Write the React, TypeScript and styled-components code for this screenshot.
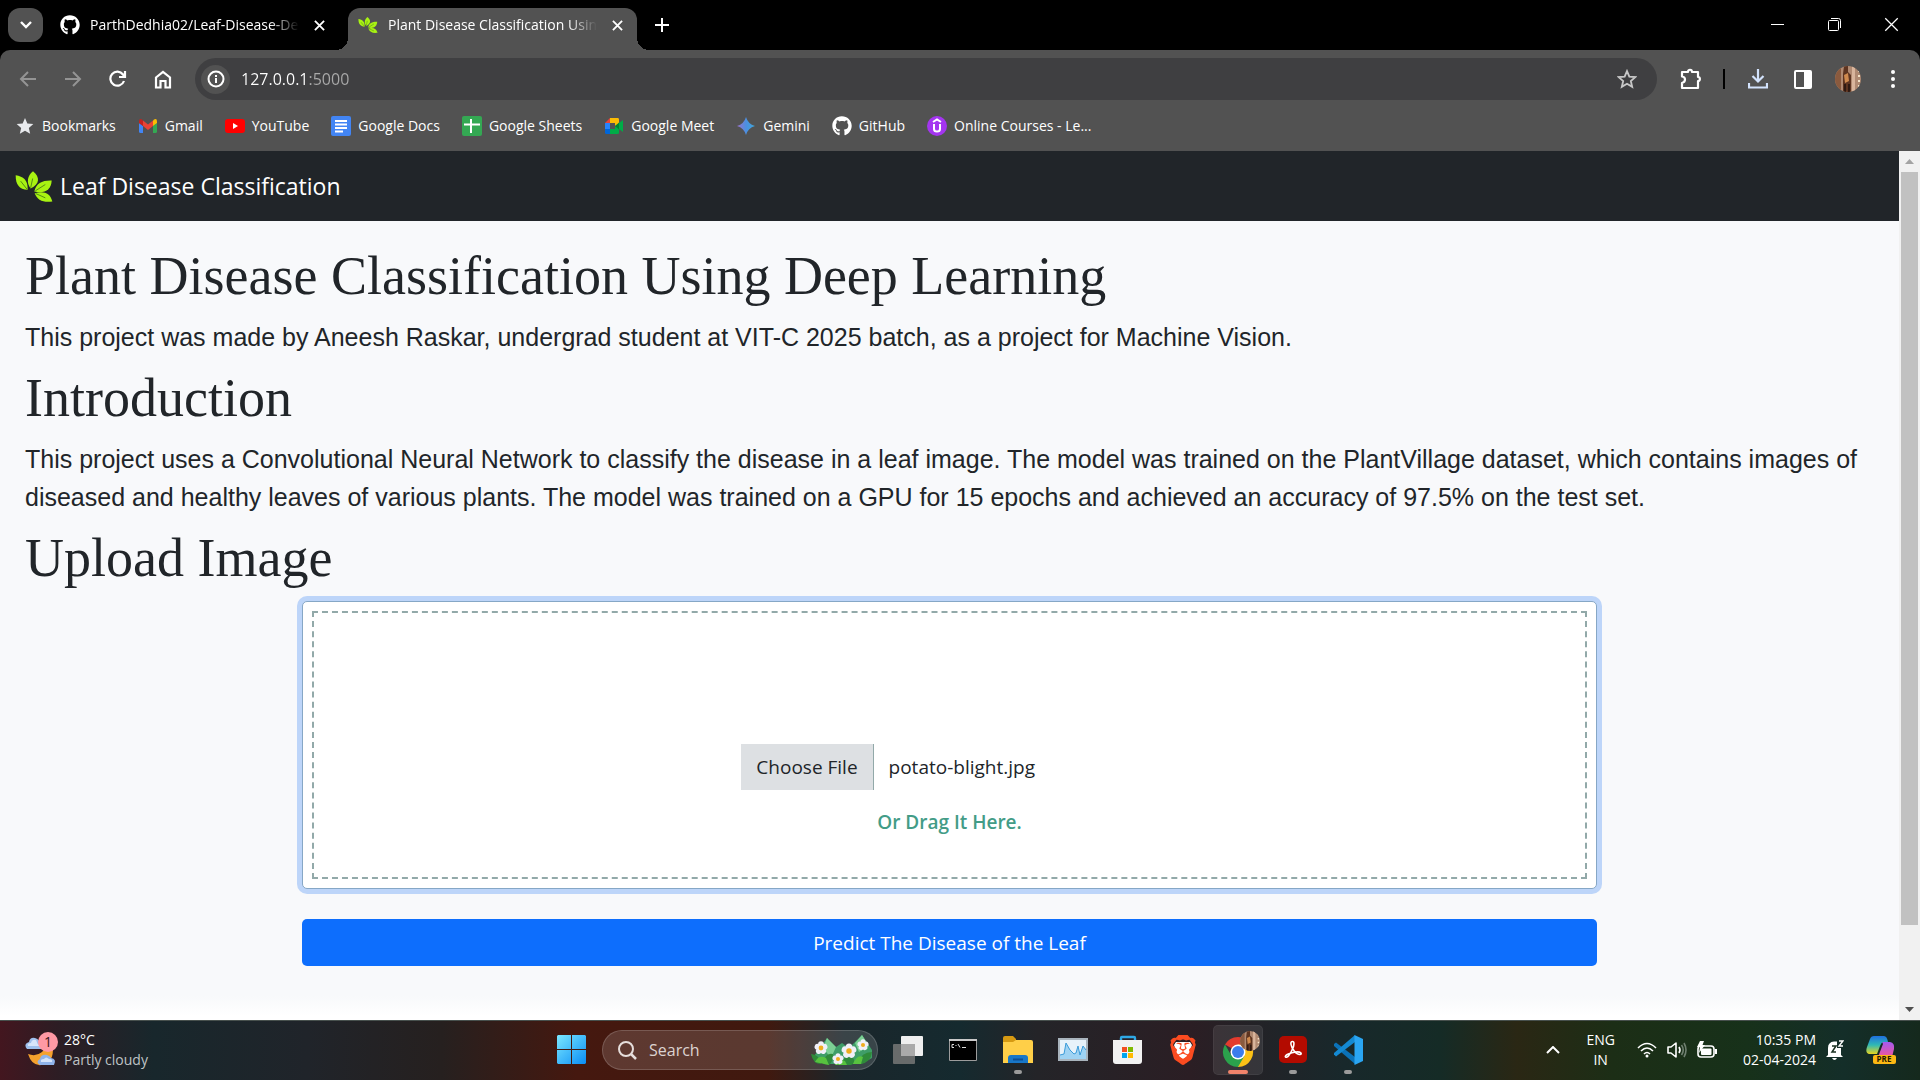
import React, { useEffect, useRef } from "react";
import styled, { createGlobalStyle, css } from "styled-components";
import { FaGithub } from "react-icons/fa";
import { SiBrave } from "react-icons/si";

const uiFont = `"Open Sans", "Noto Sans", sans-serif`;

const GlobalStyle = createGlobalStyle`
  *, *::before, *::after { box-sizing: border-box; }
  html, body { margin: 0; padding: 0; }
  body { font-family: ${uiFont}; background: #000; overflow: hidden; }
  button, input { font: inherit; margin: 0; }
  h1, p { margin: 0; }
`;

const Desktop = styled.div`
  display: flex;
  flex-direction: column;
  height: 100vh;
`;

const plainButton = css`
  display: inline-flex;
  align-items: center;
  justify-content: center;
  padding: 0;
  border: 0;
  background: none;
  color: #fff;
`;

/* ---------- Tab strip ---------- */

const TabStrip = styled.header`
  display: flex;
  align-items: flex-end;
  height: 50px;
  padding-left: 8px;
  background: #000;
`;

const TabSearch = styled.button`
  ${plainButton}
  width: 35px;
  height: 34px;
  margin-bottom: 8px;
  border-radius: 12px;
  background: #525252;
`;

const Tab = styled.div<{ $active?: boolean }>`
  position: relative;
  display: flex;
  align-items: center;
  gap: 10px;
  width: 289px;
  height: 42px;
  padding: 0 10px 8px;
  margin-left: ${(p) => (p.$active ? 9 : 7)}px;
  border-radius: 12px 12px 0 0;
  background: ${(p) => (p.$active ? "#525252" : "transparent")};
  color: #fff;

  ${(p) =>
    p.$active &&
    css`
      &::before,
      &::after {
        content: "";
        position: absolute;
        bottom: 0;
        width: 12px;
        height: 12px;
      }
      &::before {
        left: -12px;
        background: radial-gradient(circle at 0 0, transparent 12px, #525252 12px);
      }
      &::after {
        right: -12px;
        background: radial-gradient(circle at 100% 0, transparent 12px, #525252 12px);
      }
    `}
`;

const TabTitle = styled.span`
  flex: 1;
  white-space: nowrap;
  font-size: 14px;
  line-height: 20px;
  mask-image: linear-gradient(90deg, #000 86%, transparent 100%);
`;

const SmallButton = styled.button`
  ${plainButton}
  width: 20px;
  height: 20px;
`;

const NewTab = styled.button`
  ${plainButton}
  width: 34px;
  height: 34px;
  margin: 0 0 8px 8px;
`;

const WindowControls = styled.div`
  display: flex;
  align-self: flex-start;
  margin-left: auto;
`;

const WindowButton = styled.button`
  ${plainButton}
  width: 57px;
  height: 49px;
`;

/* ---------- Toolbar and bookmarks ---------- */

const ChromeFrame = styled.div`
  background: #525252;
  border-radius: 10px 10px 0 0;
`;

const Toolbar = styled.div`
  display: flex;
  align-items: center;
  height: 50px;
  padding: 8px 5px 0;
`;

const ToolButton = styled.button<{ $dim?: boolean }>`
  ${plainButton}
  width: 45px;
  height: 42px;
  color: ${(p) => (p.$dim ? "#949494" : "#fff")};
`;

const Omnibox = styled.form`
  display: flex;
  flex: 1;
  align-items: center;
  height: 42px;
  margin: 0 11px 0 10px;
  padding: 0 20px 0 6px;
  border-radius: 21px;
  background: #3f3f41;
`;

const SiteInfo = styled.button`
  ${plainButton}
  width: 29px;
  height: 29px;
  border-radius: 50%;
  background: #525252;
`;

const UrlInput = styled.input`
  flex: 1;
  min-width: 0;
  height: 28px;
  margin: 0 11px;
  padding: 0;
  border: 0;
  outline: 0;
  font-size: 16px;
  color: #fff;
  background: linear-gradient(90deg, #fff 68px, #aaa 68px);
  background-clip: text;
  -webkit-background-clip: text;
  -webkit-text-fill-color: transparent;
`;

const Divider = styled.span`
  width: 2px;
  height: 20px;
  margin: 0 10px;
  background: #000;
`;

const Bookmarks = styled.nav`
  display: flex;
  align-items: center;
  gap: 22px;
  height: 51px;
  padding-left: 15px;
`;

const Bookmark = styled.a`
  display: flex;
  align-items: center;
  gap: 7px;
  color: #fff;
  font-size: 14px;
  line-height: 20px;
  text-decoration: none;
  white-space: nowrap;
`;

/* ---------- Page ---------- */

const Viewport = styled.div`
  display: flex;
  flex: 1;
  min-height: 0;
`;

const Page = styled.div`
  flex: 1;
  min-width: 0;
  overflow: hidden;
  background: linear-gradient(0deg, #fff 4px, #f8f9fb 24px);
  color: #212529;
`;

const Navbar = styled.nav`
  display: flex;
  align-items: center;
  height: 70px;
  padding: 0 15px;
  background: #212529;
`;

const Brand = styled.a`
  display: flex;
  align-items: center;
  gap: 7px;
  color: #fff;
  font-size: 23px;
  line-height: 38px;
  text-decoration: none;
`;

const Main = styled.main`
  padding: 25px;
`;

const Heading = styled.h1`
  margin-bottom: 12px;
  font-family: "Liberation Serif", Georgia, serif;
  font-size: 54px;
  font-weight: 400;
  line-height: 60px;
`;

const Text = styled.p`
  margin-bottom: 12px;
  font-family: "Liberation Sans", Arial, sans-serif;
  font-size: 25px;
  line-height: 38px;
`;

const UploadForm = styled.form`
  display: flex;
  flex-direction: column;
  gap: 30px;
  width: 70%;
  margin: 13px auto 0;
`;

const DropZone = styled.div`
  position: relative;
`;

const FileInput = styled.input`
  display: block;
  width: 100%;
  padding: 150px 0 106px 35%;
  border: 1px solid #86a7c6;
  border-radius: 5px;
  outline: 2px dashed #92a9a9;
  outline-offset: -12px;
  background: #fff;
  box-shadow: 0 0 0 5px #bdd5f9;
  overflow: hidden;
  color: #212529;
  font-size: 19px;
  line-height: 30px;

  &::file-selector-button {
    margin: -8px 15px -8px -15px;
    padding: 8px 15px;
    border: 0 solid #92a9a9;
    border-right-width: 1px;
    border-radius: 0;
    background: #dde0e3;
    color: #212529;
    font: inherit;
  }
`;

const DropHint = styled.label`
  position: absolute;
  right: 0;
  bottom: 52px;
  left: 0;
  color: #439c87;
  font-size: 19px;
  font-weight: 600;
  line-height: 30px;
  text-align: center;
  pointer-events: none;
`;

const SubmitButton = styled.button`
  height: 47px;
  border: 0;
  border-radius: 5px;
  background: #0d6efd;
  color: #fff;
  font-size: 19px;
  line-height: 30px;
`;

const ScrollTrack = styled.div`
  display: flex;
  flex-direction: column;
  align-items: center;
  width: 21px;
  background: #f1f1f1;
`;

const ScrollArrow = styled.button<{ $down?: boolean }>`
  ${plainButton}
  width: 21px;
  height: 21px;
  color: ${(p) => (p.$down ? "#505050" : "#a3a3a3")};
  transform: ${(p) => (p.$down ? "rotate(180deg)" : "none")};
`;

const ScrollRail = styled.div`
  flex: 1;
  width: 17px;
`;

const ScrollThumb = styled.div`
  height: 91%;
  background: #c1c1c1;
`;

/* ---------- Taskbar ---------- */

const Taskbar = styled.footer`
  display: grid;
  grid-template-columns: 1fr auto 1fr;
  align-items: center;
  height: 60px;
  box-shadow: inset 0 1px 0 #47504d;
  color: #fff;
  background: linear-gradient(
    90deg,
    #43161f 0%,
    #2d1d24 3%,
    #18272c 8%,
    #20242a 16%,
    #26201f 23%,
    #45180f 30%,
    #40190f 40%,
    #1a262b 44%,
    #152a2f 50%,
    #242428 54%,
    #2b1e24 62%,
    #18282b 70%,
    #152b26 75%,
    #2a2714 79%,
    #1c2e16 84%,
    #17311a 91%,
    #142e29 96%,
    #15291d 100%
  );
`;

const Weather = styled.button`
  ${plainButton}
  justify-self: start;
  gap: 5px;
  padding-left: 24px;
  text-align: left;
`;

const Lines = styled.span<{ $align?: string; $muted?: boolean }>`
  display: flex;
  flex-direction: column;
  font-size: 14px;
  line-height: 20px;
  text-align: ${(p) => p.$align || "left"};
  white-space: nowrap;

  span:last-child {
    color: ${(p) => (p.$muted ? "#bfc3c5" : "inherit")};
  }
`;

const Dock = styled.div`
  display: flex;
  align-items: center;
  gap: 5px;
`;

const DockButton = styled.button<{ $active?: boolean; $running?: boolean }>`
  ${plainButton}
  position: relative;
  width: 50px;
  height: 50px;
  border-radius: 5px;
  ${(p) =>
    p.$active &&
    css`
      background: rgba(255, 255, 255, 0.09);
      box-shadow: inset 0 0 0 1px rgba(255, 255, 255, 0.05);
    `}

  ${(p) =>
    (p.$active || p.$running) &&
    css`
      &::after {
        content: "";
        position: absolute;
        bottom: 1px;
        left: 50%;
        width: ${p.$active ? 20 : 8}px;
        height: 4px;
        border-radius: 2px;
        background: ${p.$active ? "#f0836b" : "#9b9b9b"};
        transform: translateX(-50%);
      }
    `}
`;

const SearchBox = styled.label`
  display: flex;
  align-items: center;
  gap: 12px;
  width: 276px;
  height: 40px;
  padding: 0 4px 0 15px;
  border: 1px solid rgba(255, 255, 255, 0.17);
  border-radius: 20px;
  background: rgba(255, 255, 255, 0.14);
`;

const SearchInput = styled.input`
  flex: 1;
  min-width: 0;
  padding: 0;
  border: 0;
  outline: 0;
  background: none;
  color: #fff;
  font-size: 16px;

  &::placeholder {
    color: #dcd3d1;
    opacity: 1;
  }
`;

const Tray = styled.div`
  display: flex;
  align-items: center;
  justify-self: end;
  padding-right: 24px;
`;

const TrayButton = styled.button<{ $left?: number }>`
  ${plainButton}
  gap: 10px;
  margin-left: ${(p) => p.$left ?? 0}px;
`;

/* ---------- Drawings ---------- */

const LeafLogo = ({ width }: { width: number }) => (
  <svg width={width} height={Math.round(width * 0.82)} viewBox="21 28 114 92" aria-hidden="true">
    <g fill="#a8f312">
      <path d="M23 40C46 44 60 54 59 84C33 82 23 68 23 40Z" />
      <path d="M75 28C97 46 95 66 68 80C54 62 58 42 75 28Z" />
      <path d="M131 56C130 84 110 96 79 89C84 64 103 55 131 56Z" />
      <path d="M133 119C104 123 88 114 80 94C108 86 127 94 133 119Z" />
    </g>
    <g fill="none" stroke="#2b5a16" strokeWidth="2">
      <path d="M38 58L57 82M74 50L68 78M112 68L82 87M112 108L83 95" />
    </g>
  </svg>
);

const CloseIcon = ({ size = 12, w = 2 }: { size?: number; w?: number }) => (
  <svg width={size} height={size} viewBox="0 0 12 12" stroke="currentColor" strokeWidth={w} fill="none">
    <path d="M1 1L11 11M11 1L1 11" />
  </svg>
);

const Arrow = ({ flip }: { flip?: boolean }) => (
  <svg width="18" height="18" viewBox="0 0 18 18" fill="none" stroke="currentColor" strokeWidth="2">
    <path d={flip ? "M1 9H16M9 2L16 9L9 16" : "M17 9H2M9 2L2 9L9 16"} />
  </svg>
);

const Avatar = ({ size }: { size: number }) => (
  <svg width={size} height={size} viewBox="0 0 26 26" aria-hidden="true">
    <clipPath id={`round${size}`}>
      <circle cx="13" cy="13" r="13" />
    </clipPath>
    <g clipPath={`url(#round${size})`}>
      <path fill="#b08a72" d="M0 0H26V26H0Z" />
      <path fill="#8a5a3e" d="M0 0H6V26H0Z" />
      <path fill="#d9b59c" d="M17 0H20V26H17Z" />
      <path fill="#5d3420" d="M9 0H13V6L16 9V26H8V8Z" />
      <path fill="#d08a4e" d="M9 9L13 7L14 15L10 17Z" />
      <path fill="#2f1a12" d="M9 18H11V26H9ZM13 18H15V26H13Z" />
      <path stroke="#f3e2c8" strokeWidth="2" strokeDasharray="2 3" d="M24 4V24" />
    </g>
  </svg>
);

const Star = ({ filled }: { filled?: boolean }) => (
  <svg width="20" height="20" viewBox="0 0 24 24" fill={filled ? "#e8eaed" : "none"} stroke={filled ? "none" : "#c7c7c7"} strokeWidth="2.2">
    <path d="M12 2.5L14.8 9.1L22 9.7L16.6 14.4L18.2 21.4L12 17.7L5.8 21.4L7.4 14.4L2 9.7L9.2 9.1Z" />
  </svg>
);

const GmailIcon = () => (
  <svg width="20" height="20" viewBox="0 0 20 20">
    <path fill="#4285f4" d="M1 7L5 10V17H2.500Q1 17 1 15.500Z" />
    <path fill="#34a853" d="M19 7L15 10V17H17.500Q19 17 19 15.500Z" />
    <path fill="#ea4335" d="M5 4.500L10 8.500L15 4.500V10L10 14L5 10Z" />
    <path fill="#c5221f" d="M1 5.500Q1 2 4 3.500L5 4.500V10L1 7Z" />
    <path fill="#fbbc04" d="M19 5.500Q19 2 16 3.500L15 4.500V10L19 7Z" />
  </svg>
);

const YouTubeIcon = () => (
  <svg width="20" height="20" viewBox="0 0 20 20">
    <rect y="3" width="20" height="14" rx="3" fill="#f00" />
    <path fill="#fff" d="M8 7L13 10L8 13Z" />
  </svg>
);

const DocsIcon = () => (
  <svg width="20" height="20" viewBox="0 0 20 20">
    <rect width="20" height="20" rx="2" fill="#4285f4" />
    <path stroke="#fff" strokeWidth="2" d="M4 5H16M4 8.500H16M4 12H16M4 15.500H12" />
  </svg>
);

const SheetsIcon = () => (
  <svg width="20" height="20" viewBox="0 0 20 20">
    <rect width="20" height="20" rx="2" fill="#34a853" />
    <path stroke="#fff" strokeWidth="2" d="M2 8.500H18M9 3V17" />
  </svg>
);

const MeetIcon = () => (
  <svg width="20" height="20" viewBox="0 0 20 20">
    <path fill="#ea4335" d="M1 7L6 2V7Z" />
    <path fill="#fbbc04" d="M6 2H14Q15 2 15 3.500V8L11 10V7H6Z" />
    <path fill="#2684fc" d="M1 7H6V13H1Z" />
    <path fill="#0066da" d="M1 13H6V18H2.500Q1 18 1 16.500Z" />
    <path fill="#00ac47" d="M6 13H11V10L15 12V16.500Q15 18 13.500 18H6Z" />
    <path fill="#00832d" d="M11 10L15 6.500V13.500Z" />
    <path fill="#00ac47" d="M15 7L19 4V16L15 13Z" />
  </svg>
);

const GeminiIcon = () => (
  <svg width="20" height="20" viewBox="0 0 20 20">
    <defs>
      <linearGradient id="gem" x1="0" x2="1">
        <stop offset="0" stopColor="#9b72cb" />
        <stop offset=".5" stopColor="#4c8fe0" />
        <stop offset="1" stopColor="#3fa6d8" />
      </linearGradient>
    </defs>
    <path fill="url(#gem)" d="M10 1Q12 8 19 10Q12 12 10 19Q8 12 1 10Q8 8 10 1Z" />
  </svg>
);

const UdemyIcon = () => (
  <svg width="20" height="20" viewBox="0 0 20 20" fill="none" stroke="#fff" strokeWidth="2">
    <circle cx="10" cy="10" r="10" fill="#a435f0" stroke="none" />
    <path d="M6 6L10 3.500L14 6M7 8V13Q7 15.500 10 15.500Q13 15.500 13 13V8" />
  </svg>
);

const WeatherIcon = () => (
  <svg width="35" height="36" viewBox="0 0 35 36" aria-hidden="true">
    <path fill="#f5a12d" d="M4 22Q12 25 18 20Q22 15 28 12Q31 24 24 31Q9 38 4 22Z" />
    <path fill="#9fc0ee" d="M3 17Q-1 12 5 10Q6 5 11 6Q15 7 16 11Q20 13 17 17Z" />
    <path fill="#d7e5fb" d="M4 14Q3 11 7 11Q8 7 12 8Q13 12 16 14Z" />
    <path fill="#8fb3ea" d="M16 33Q11 30 16 27Q17 22 23 23Q26 24 27 26Q33 27 30 33Z" />
    <path fill="#d4e3fa" d="M17 30Q16 27 20 27Q22 24 25 27Q29 27 28 30Z" />
    <circle cx="24" cy="10" r="10" fill="#ff99a4" />
    <text x="24" y="15" fill="#3a1519" fontFamily="Open Sans, sans-serif" fontSize="14" textAnchor="middle">1</text>
  </svg>
);

const WindowsIcon = () => (
  <svg width="30" height="30" viewBox="0 0 30 30">
    <defs>
      <linearGradient id="win" x1="0" y1="0" x2="1" y2="1">
        <stop offset="0" stopColor="#7be8ff" />
        <stop offset="1" stopColor="#0a8df5" />
      </linearGradient>
    </defs>
    <path fill="url(#win)" d="M1 0H14V14H0V1ZM15 0H28L29 1V14H15ZM0 15H14V29H1L0 28ZM15 15H29V28L28 29H15Z" />
  </svg>
);

const Flower = ({ x, y, r }: { x: number; y: number; r: number }) => (
  <g transform={`translate(${x} ${y})`}>
    {[0, 72, 144, 216, 288].map((a) => (
      <ellipse key={a} cx="0" cy={-r * 0.5} rx={r * 0.42} ry={r * 0.45} fill="#f0eff8" transform={`rotate(${a})`} />
    ))}
    <circle r={r * 0.34} fill="#f0ad1e" />
  </g>
);

const FlowersArt = () => (
  <svg width="62" height="32" viewBox="0 0 62 32" aria-hidden="true">
    <path fill="#3f9d68" d="M3 22L16 4L25 13L31 9L38 14L51 1L61 16V24L50 30H14Z" />
    <path fill="#7ccf94" d="M16 4L25 13L20 24L12 14ZM51 1L58 12L48 18L44 9Z" />
    <path fill="#2f8a3a" d="M0 20Q8 20 10 30Q2 30 0 20ZM12 30Q14 18 22 20Q22 28 18 31ZM30 31Q32 20 42 24Q46 29 40 31ZM48 29Q50 18 61 18Q60 28 50 30Z" />
    <path fill="#58c23f" d="M4 28Q8 20 15 24L18 31ZM24 31Q27 24 34 27L36 31ZM42 30Q46 20 52 23L50 30Z" />
    <Flower x={10} y={14} r={7} />
    <Flower x={38} y={17} r={8} />
    <Flower x={52} y={11} r={6} />
    <Flower x={27} y={25} r={6} />
  </svg>
);

const TaskViewIcon = () => (
  <svg width="30" height="30" viewBox="0 0 30 30">
    <rect x="8" y="1" width="22" height="20" rx="1" fill="#efefef" />
    <rect y="9" width="22" height="20" rx="1" fill="#777" fillOpacity=".85" />
    <path fill="#aaa" d="M8 9H22V21H8Z" />
  </svg>
);

const TerminalIcon = () => (
  <svg width="28" height="22" viewBox="0 0 28 22">
    <path fill="#000" stroke="#9c9c9c" d="M.5.500H27.500V21.500H.5Z" />
    <path fill="#c9c9c9" d="M0 0H28V2H0Z" />
    <path stroke="#ddd" fill="none" d="M3 5.500H5M3 8.500H5M3 5.500V8.500M7 6V7M9 5L11 8.500M13 8.500H17" />
  </svg>
);

const ExplorerIcon = () => (
  <svg width="30" height="28" viewBox="0 0 30 28">
    <path fill="#d69a12" d="M0 2Q0 0 2 0H10L13 3V8H0Z" />
    <path fill="#ffcf48" d="M0 6H10L13 4H28Q30 4 30 6V27H0Z" />
    <path fill="#1877c8" d="M5 27V22Q5 19 8 19H22Q25 19 25 22V27Z" />
    <path stroke="#0d4f95" strokeWidth="2" d="M10 23.500H20" />
  </svg>
);

const MonitorIcon = () => (
  <svg width="30" height="24" viewBox="0 0 30 24">
    <path fill="#e7f2fa" stroke="#a9b4bd" strokeWidth="2" d="M1 1H29V22H1Z" />
    <path fill="#9fd3f3" d="M2 17L6 16L8 5L12 12L16 16L18 15L20 8L22 17L25 8L28 12V21H2Z" />
    <path fill="none" stroke="#3a9bd9" strokeWidth="1" d="M2 17L6 16L8 5L12 12L16 16L18 15L20 8L22 17L25 8L28 12" />
  </svg>
);

const StoreIcon = () => (
  <svg width="30" height="30" viewBox="0 0 30 30">
    <path fill="none" stroke="#2ea8e5" strokeWidth="2.400" d="M8 7V3Q8 2 9 2H21Q22 2 22 3V7" />
    <path fill="#f2f2f2" d="M0 5H29V26Q29 29 26 29H3Q0 29 0 26Z" />
    <path fill="#f25022" d="M9 12H14V17H9Z" />
    <path fill="#7fba00" d="M15 12H20V17H15Z" />
    <path fill="#00a4ef" d="M9 18H14V23H9Z" />
    <path fill="#ffb900" d="M15 18H20V23H15Z" />
  </svg>
);

const BraveIcon = () => (
  <svg width="30" height="30" viewBox="0 0 30 30">
    <path fill="#fff" d="M8 7H22L24 10L21 20L15 25L9 20L6 10Z" />
    <SiBrave size={30} color="#fb4b20" />
  </svg>
);

const ChromeIcon = () => (
  <svg width="44" height="40" viewBox="0 0 44 40">
    <path fill="#e33b2e" d="M22 22L9 14.500A15 15 0 0 1 35 14.500Z" />
    <path fill="#fbc116" d="M22 22L35 14.500A15 15 0 0 1 22 37Z" />
    <path fill="#fbc116" d="M22 14.500H35V22L24 35L22 37Z" />
    <path fill="#2ba24c" d="M9 14.500A15 15 0 0 0 22 37L28.500 25.800L15.500 25.800Z" />
    <circle cx="22" cy="22" r="7.500" fill="#fff" />
    <circle cx="22" cy="22" r="6" fill="#3b7ded" />
    <g transform="translate(24 1)">
      <Avatar size={20} />
    </g>
  </svg>
);

const AcrobatIcon = () => (
  <svg width="28" height="28" viewBox="0 0 28 28">
    <rect width="28" height="27" rx="5" fill="#b30b00" />
    <path
      fill="none"
      stroke="#fff"
      strokeWidth="1.600"
      d="M13 5.500C16 5 15 10 13.500 13C11.500 18 8 22.500 6.500 21C5 19 12 16.500 17 16C22 15.500 23.500 18 21 18.500C17 19 12.500 12 12 8.500C11.800 7 12 5.500 13 5.500Z"
    />
  </svg>
);

const VsCodeIcon = () => (
  <svg width="30" height="30" viewBox="0 0 30 30">
    <path fill="#0b72b8" d="M1 9L3 7.500L22 22V29L1 11Z" />
    <path fill="#1489d2" d="M1 19.500L3 21.500L22 7V0L1 18Z" />
    <path fill="#2aa5f2" d="M21.500 0L30 4V26L21.500 30Z" />
  </svg>
);

const CopilotIcon = () => (
  <svg width="30" height="30" viewBox="0 0 30 30">
    <defs>
      <linearGradient id="cpA" x1="0" y1="0" x2="0" y2="1">
        <stop offset="0" stopColor="#1f6fe0" />
        <stop offset=".5" stopColor="#2fb9b4" />
        <stop offset="1" stopColor="#e8d51f" />
      </linearGradient>
      <linearGradient id="cpB" x1="0" y1="0" x2="0" y2="1">
        <stop offset="0" stopColor="#a45af0" />
        <stop offset="1" stopColor="#f0569a" />
      </linearGradient>
    </defs>
    <path fill="url(#cpB)" d="M16 7H24Q29 8 28 14L26 22H12L17 9Z" />
    <path fill="url(#cpA)" d="M8 1H18Q21 1 22 7H17Q15 8 14 11L11 19H3Q-1 18 1 12L4 4Q5 1 8 1Z" />
    <rect x="7" y="20" width="23" height="9" rx="2" fill="#fcb813" />
    <text x="18" y="27" fill="#241a00" fontFamily="Open Sans, sans-serif" fontSize="8" fontWeight="700" textAnchor="middle">PRE</text>
  </svg>
);

const bookmarks: [string, React.ReactNode][] = [
  ["Bookmarks", <Star filled />],
  ["Gmail", <GmailIcon />],
  ["YouTube", <YouTubeIcon />],
  ["Google Docs", <DocsIcon />],
  ["Google Sheets", <SheetsIcon />],
  ["Google Meet", <MeetIcon />],
  ["Gemini", <GeminiIcon />],
  ["GitHub", <FaGithub size={20} />],
  ["Online Courses - Le...", <UdemyIcon />],
];

type DockItem = { name: string; icon: React.ReactNode; running?: boolean; active?: boolean };

const dockItems: DockItem[] = [
  { name: "Task view", icon: <TaskViewIcon /> },
  { name: "Command Prompt", icon: <TerminalIcon /> },
  { name: "File Explorer", icon: <ExplorerIcon />, running: true },
  { name: "Resource Monitor", icon: <MonitorIcon /> },
  { name: "Microsoft Store", icon: <StoreIcon /> },
  { name: "Brave", icon: <BraveIcon /> },
  { name: "Google Chrome", icon: <ChromeIcon />, active: true },
  { name: "Adobe Acrobat", icon: <AcrobatIcon />, running: true },
  { name: "Visual Studio Code", icon: <VsCodeIcon />, running: true },
];

const Browser = () => (
  <>
    <TabStrip>
      <TabSearch aria-label="Search tabs">
        <svg width="12" height="8" viewBox="0 0 12 8" fill="none" stroke="currentColor" strokeWidth="2.400">
          <path d="M1 1L6 6L11 1" />
        </svg>
      </TabSearch>
      <Tab>
        <FaGithub size={20} />
        <TabTitle>ParthDedhia02/Leaf-Disease-De</TabTitle>
        <SmallButton aria-label="Close tab"><CloseIcon size={11} /></SmallButton>
      </Tab>
      <Tab $active>
        <LeafLogo width={20} />
        <TabTitle>Plant Disease Classification Usin</TabTitle>
        <SmallButton aria-label="Close tab"><CloseIcon size={11} /></SmallButton>
      </Tab>
      <NewTab aria-label="New tab">
        <svg width="14" height="14" viewBox="0 0 14 14" stroke="currentColor" strokeWidth="2">
          <path d="M7 0V14M0 7H14" />
        </svg>
      </NewTab>
      <WindowControls>
        <WindowButton aria-label="Minimize">
          <svg width="13" height="13" viewBox="0 0 13 13" stroke="currentColor"><path d="M0 6.500H13" /></svg>
        </WindowButton>
        <WindowButton aria-label="Restore">
          <svg width="13" height="13" viewBox="0 0 13 13" stroke="currentColor" fill="none">
            <rect x=".5" y="2.500" width="10" height="10" rx="1" />
            <path d="M3 .5H10.500Q12.500.5 12.500 2.500V10" />
          </svg>
        </WindowButton>
        <WindowButton aria-label="Close"><CloseIcon size={15} w={1} /></WindowButton>
      </WindowControls>
    </TabStrip>
    <ChromeFrame>
      <Toolbar>
        <ToolButton $dim aria-label="Back"><Arrow /></ToolButton>
        <ToolButton $dim aria-label="Forward"><Arrow flip /></ToolButton>
        <ToolButton aria-label="Reload">
          <svg width="18" height="18" viewBox="0 0 18 18" fill="none" stroke="currentColor" strokeWidth="2.200">
            <path d="M15 11A7 7 0 1 1 14 4.500L15.500 6.500M16 1V7H10" />
          </svg>
        </ToolButton>
        <ToolButton aria-label="Home">
          <svg width="18" height="19" viewBox="0 0 18 19" fill="none" stroke="currentColor" strokeWidth="2.200">
            <path d="M2 7.500L9 2L16 7.500V17.500H11.500V11H6.500V17.500H2Z" />
          </svg>
        </ToolButton>
        <Omnibox onSubmit={(e) => e.preventDefault()}>
          <SiteInfo type="button" aria-label="View site information">
            <svg width="18" height="18" viewBox="0 0 18 18" fill="none" stroke="currentColor" strokeWidth="2">
              <circle cx="9" cy="9" r="7.500" />
              <path d="M9 8V13M9 5V7" />
            </svg>
          </SiteInfo>
          <UrlInput aria-label="Address and search bar" defaultValue="127.0.0.1:5000" spellCheck={false} />
          <SmallButton type="button" aria-label="Bookmark this tab"><Star /></SmallButton>
        </Omnibox>
        <ToolButton aria-label="Extensions">
          <svg width="22" height="22" viewBox="0 0 22 22" fill="none" stroke="currentColor" strokeWidth="2.200">
            <path d="M2 4H8C8 1 12 1 12 4H18V9C20.500 9 20.500 13 18 13V20H2V15C6 14 6 9 2 8.500Z" strokeLinejoin="round" />
          </svg>
        </ToolButton>
        <Divider />
        <ToolButton aria-label="Downloads">
          <svg width="20" height="20" viewBox="0 0 20 20" fill="none" stroke="#d3e3fd" strokeWidth="2.200">
            <path d="M10 0V12M4.500 7L10 12.500L15.500 7M1 14V18.500H19V14" />
          </svg>
        </ToolButton>
        <ToolButton aria-label="Side panel">
          <svg width="18" height="19" viewBox="0 0 18 19">
            <rect x="1" y="1" width="16" height="17" rx="1" fill="none" stroke="currentColor" strokeWidth="2" />
            <path fill="currentColor" d="M10 1H17V18H10Z" />
          </svg>
        </ToolButton>
        <ToolButton aria-label="Profile"><Avatar size={26} /></ToolButton>
        <ToolButton aria-label="Menu">
          <svg width="4" height="18" viewBox="0 0 4 18" fill="currentColor">
            <circle cx="2" cy="2" r="2" />
            <circle cx="2" cy="9" r="2" />
            <circle cx="2" cy="16" r="2" />
          </svg>
        </ToolButton>
      </Toolbar>
      <Bookmarks aria-label="Bookmarks">
        {bookmarks.map(([label, icon]) => (
          <Bookmark key={label} href="#">
            {icon}
            {label}
          </Bookmark>
        ))}
      </Bookmarks>
    </ChromeFrame>
  </>
);

const Triangle = () => (
  <svg width="9" height="5" viewBox="0 0 9 5" fill="currentColor"><path d="M0 5L4.500 0L9 5Z" /></svg>
);

const UploadPage = () => {
  const fileRef = useRef<HTMLInputElement>(null);

  useEffect(() => {
    if (!fileRef.current) return;
    const transfer = new DataTransfer();
    transfer.items.add(new File([""], "potato-blight.jpg", { type: "image/jpeg" }));
    fileRef.current.files = transfer.files;
  }, []);

  return (
    <Viewport>
      <Page>
        <Navbar>
          <Brand href="#">
            <LeafLogo width={38} />
            Leaf Disease Classification
          </Brand>
        </Navbar>
        <Main>
          <Heading>Plant Disease Classification Using Deep Learning</Heading>
          <Text>This project was made by Aneesh Raskar, undergrad student at VIT-C 2025 batch, as a project for Machine Vision.</Text>
          <Heading>Introduction</Heading>
          <Text>
            This project uses a Convolutional Neural Network to classify the disease in a leaf image. The model was trained on the PlantVillage dataset, which contains images of diseased and healthy leaves of various plants. The model was trained on a GPU for 15 epochs and achieved an accuracy of 97.5% on the test set.
          </Text>
          <Heading>Upload Image</Heading>
          <UploadForm onSubmit={(e) => e.preventDefault()}>
            <DropZone>
              <FileInput ref={fileRef} id="leaf-image" type="file" />
              <DropHint htmlFor="leaf-image">Or Drag It Here.</DropHint>
            </DropZone>
            <SubmitButton>Predict The Disease of the Leaf</SubmitButton>
          </UploadForm>
        </Main>
      </Page>
      <ScrollTrack>
        <ScrollArrow aria-label="Scroll up"><Triangle /></ScrollArrow>
        <ScrollRail><ScrollThumb /></ScrollRail>
        <ScrollArrow $down aria-label="Scroll down"><Triangle /></ScrollArrow>
      </ScrollTrack>
    </Viewport>
  );
};

const WindowsTaskbar = () => (
  <Taskbar>
    <Weather>
      <WeatherIcon />
      <Lines $muted>
        <span>28°C</span>
        <span>Partly cloudy</span>
      </Lines>
    </Weather>
    <Dock>
      <DockButton aria-label="Start"><WindowsIcon /></DockButton>
      <SearchBox>
        <svg width="19" height="19" viewBox="0 0 19 19" fill="none" stroke="#e6dedc" strokeWidth="2">
          <circle cx="8" cy="8" r="7" />
          <path strokeWidth="2.500" d="M13 13L18 18" />
        </svg>
        <SearchInput type="text" aria-label="Search" placeholder="Search" />
        <FlowersArt />
      </SearchBox>
      {dockItems.map((d) => (
        <DockButton key={d.name} aria-label={d.name} $running={d.running} $active={d.active}>
          {d.icon}
        </DockButton>
      ))}
    </Dock>
    <Tray>
      <TrayButton aria-label="Show hidden icons">
        <svg width="14" height="8" viewBox="0 0 14 8" fill="none" stroke="currentColor" strokeWidth="2">
          <path d="M1 7L7 1L13 7" />
        </svg>
      </TrayButton>
      <TrayButton $left={26}>
        <Lines $align="center">
          <span>ENG</span>
          <span>IN</span>
        </Lines>
      </TrayButton>
      <TrayButton $left={22} aria-label="Network, volume and battery">
        <svg width="20" height="16" viewBox="0 0 20 16" fill="none" stroke="currentColor" strokeWidth="1.600">
          <path d="M1 6Q10-3 19 6M4 9Q10 3 16 9M7 12Q10 9 13 12" />
          <circle cx="10" cy="14" r="1.500" fill="currentColor" stroke="none" />
        </svg>
        <svg width="20" height="18" viewBox="0 0 20 18" fill="none" stroke="currentColor" strokeWidth="1.600">
          <path d="M1 6H4L9 2V16L4 12H1Z" strokeLinejoin="round" />
          <path d="M12 6Q14 9 12 12" />
          <path stroke="#6f7f70" d="M14.500 4Q18 9 14.500 14M17 2Q21 9 17 16" />
        </svg>
        <svg width="20" height="18" viewBox="0 0 20 18">
          <rect x="1" y="5" width="16" height="11" rx="3" fill="none" stroke="currentColor" strokeWidth="1.600" />
          <rect x="4" y="7.500" width="10.500" height="6.500" rx="1" fill="currentColor" />
          <path fill="currentColor" d="M18 8H20V13H18ZM3 0L7 0L5.500 4H8L2 12L3 6H0Z" />
        </svg>
      </TrayButton>
      <TrayButton $left={26}>
        <Lines $align="right">
          <span>10:35 PM</span>
          <span>02-04-2024</span>
        </Lines>
        <svg width="18" height="20" viewBox="0 0 18 20" fill="currentColor">
          <path d="M2 15V8Q2 2 8 1.500H11V8H15V15L17 17H0ZM6 18H11Q10 20 8.500 20Q7 20 6 18Z" />
          <path fill="none" stroke="#1a3020" strokeWidth="1.500" d="M6 6H10L6 12H10" />
          <path fill="none" stroke="currentColor" strokeWidth="1.400" d="M13 1H17L13 6H17" />
        </svg>
      </TrayButton>
      <TrayButton $left={22} aria-label="Copilot"><CopilotIcon /></TrayButton>
    </Tray>
  </Taskbar>
);

export default function App() {
  return (
    <Desktop>
      <GlobalStyle />
      <Browser />
      <UploadPage />
      <WindowsTaskbar />
    </Desktop>
  );
}
